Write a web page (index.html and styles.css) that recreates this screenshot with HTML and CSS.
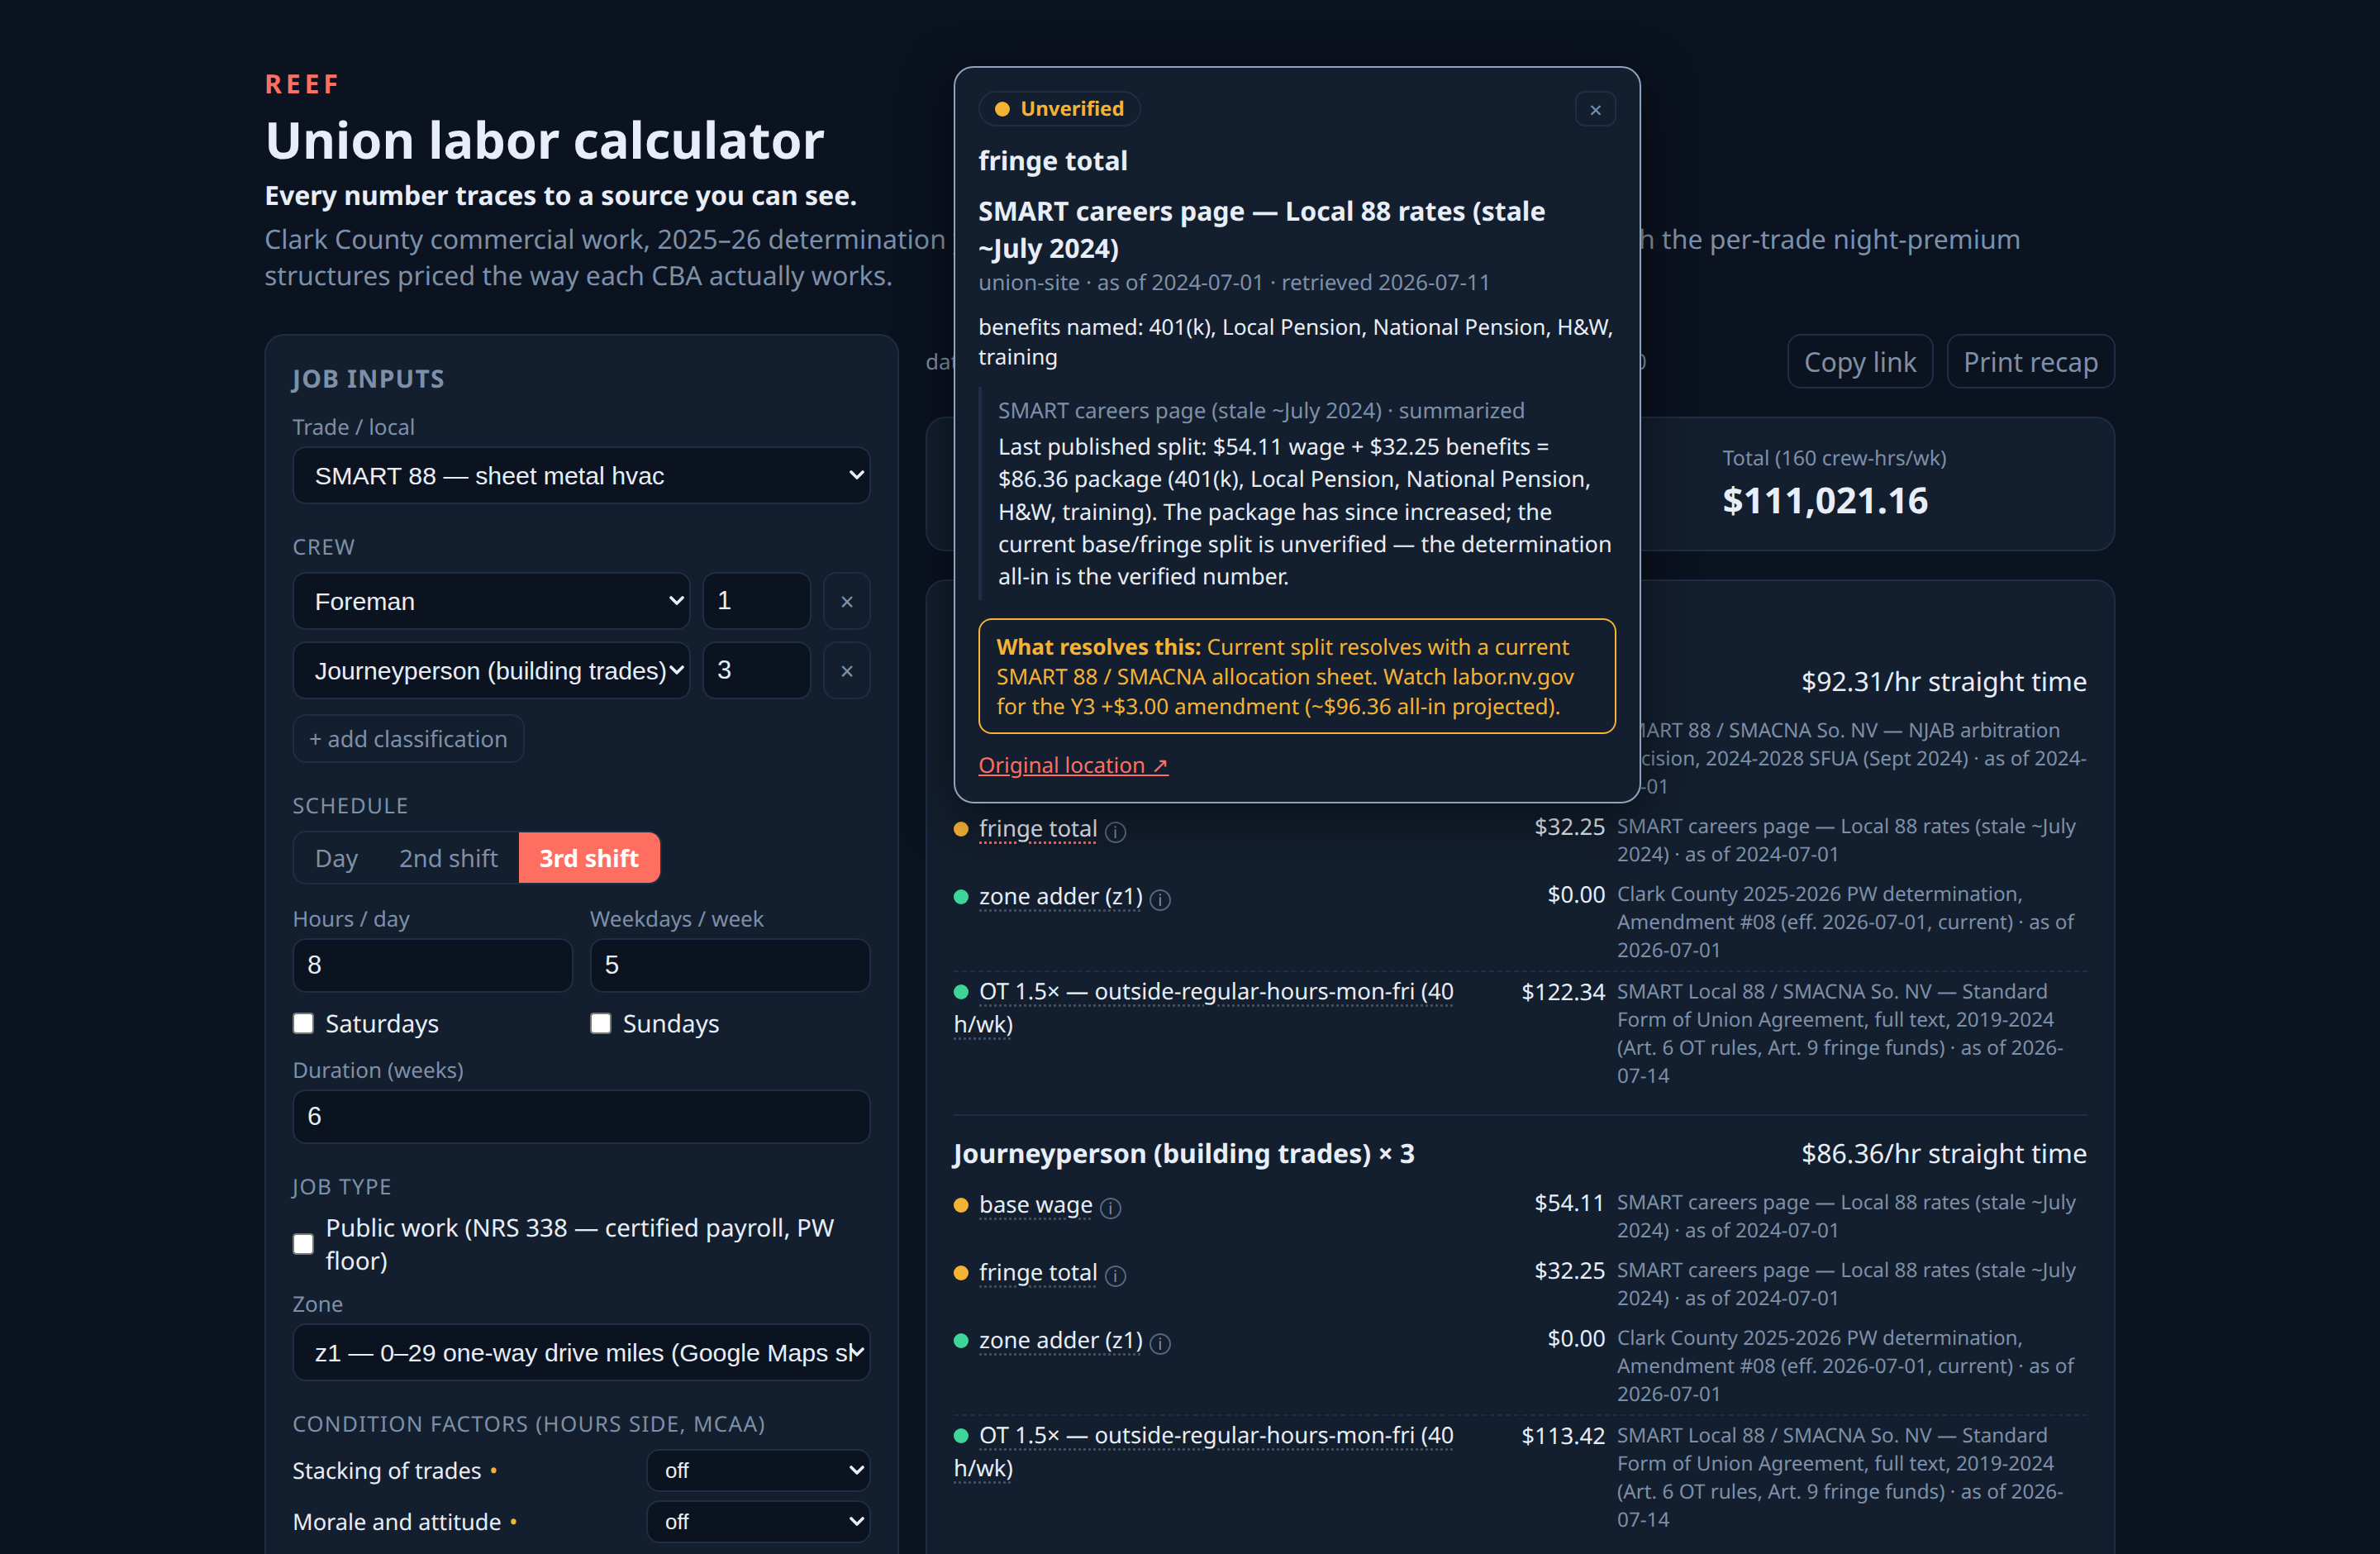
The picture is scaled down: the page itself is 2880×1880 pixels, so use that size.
FILE: index.html
```html
<!DOCTYPE html>
<html lang="en">
<head>
<meta charset="utf-8">
<title>Union labor calculator</title>
<link rel="stylesheet" href="styles.css">
</head>
<body>
<main class="page">
  <header class="hero">
    <div class="brand">REEF</div>
    <h1>Union labor calculator</h1>
    <p class="tagline">Every number traces to a source you can see.</p>
    <p class="desc">Clark County commercial work, 2025–26 determination year, with basic and fringe rates by crews and shifts, with the per-trade night-premium structures priced the way each CBA actually works.</p>
  </header>
  <div class="layout">
    <aside class="panel inputs">
      <h2 class="panel-title">JOB INPUTS</h2>
      <label class="field-label first">Trade / local</label>
      <select class="control tall"><option>SMART 88 — sheet metal hvac</option></select>

      <h3 class="section">CREW</h3>
      <div class="crew-row">
        <select class="control tall"><option>Foreman</option></select>
        <input class="control num" type="number" value="1">
        <button class="icon-btn">×</button>
      </div>
      <div class="crew-row">
        <select class="control tall"><option>Journeyperson (building trades)</option></select>
        <input class="control num" type="number" value="3">
        <button class="icon-btn">×</button>
      </div>
      <button class="add-btn">+ add classification</button>

      <h3 class="section">SCHEDULE</h3>
      <div class="seg">
        <button class="seg-btn">Day</button>
        <button class="seg-btn">2nd shift</button>
        <button class="seg-btn active">3rd shift</button>
      </div>
      <div class="two-col hours">
        <div>
          <label class="field-label">Hours / day</label>
          <input class="control num" type="number" value="8">
        </div>
        <div>
          <label class="field-label">Weekdays / week</label>
          <input class="control num" type="number" value="5">
        </div>
      </div>
      <div class="two-col checks">
        <label class="check"><input type="checkbox"><span>Saturdays</span></label>
        <label class="check"><input type="checkbox"><span>Sundays</span></label>
      </div>
      <label class="field-label duration">Duration (weeks)</label>
      <input class="control num" type="number" value="6">

      <h3 class="section">JOB TYPE</h3>
      <label class="check public"><input type="checkbox"><span>Public work (NRS 338 — certified payroll, PW floor)</span></label>
      <label class="field-label zone">Zone</label>
      <select class="control tall"><option>z1 — 0–29 one-way drive miles (Google Maps shortest route)</option></select>

      <h3 class="section cond">CONDITION FACTORS (HOURS SIDE, MCAA)</h3>
      <div class="factor"><span>Stacking of trades <i class="mini">•</i></span><select class="control small"><option>off</option></select></div>
      <div class="factor"><span>Morale and attitude <i class="mini">•</i></span><select class="control small"><option>off</option></select></div>
    </aside>

    <section class="results">
      <div class="toolbar">
        <span class="meta">data as of 2026-07-11 · Clark County 2025-2026 PW, Amendment #08 · 0</span>
        <div class="actions">
          <button class="ghost">Copy link</button>
          <button class="ghost">Print recap</button>
        </div>
      </div>
      <div class="panel summary">
        <div><div class="sum-label">Blended rate</div><div class="sum-value">$87.85</div></div>
        <div><div class="sum-label">Weekly</div><div class="sum-value">$18,503.53</div></div>
        <div><div class="sum-label">Total (160 crew-hrs/wk)</div><div class="sum-value">$111,021.16</div></div>
      </div>
      <div class="panel details">
        <h2 class="details-title">Rate build-up</h2>

        <div class="group">
          <div class="group-head"><strong>Foreman × 1</strong><span>$92.31/hr straight time</span></div>
          <div class="line">
            <div class="line-name"><i class="dot green"></i><span class="term">base wage</span> <span class="info">i</span></div>
            <div class="amount">$60.06</div>
            <div class="source">SMART 88 / SMACNA So. NV — NJAB arbitration decision, 2024-2028 SFUA (Sept 2024) · as of 2024-09-01</div>
          </div>
          <div class="line">
            <div class="line-name"><i class="dot amber"></i><span class="term open">fringe total</span> <span class="info">i</span></div>
            <div class="amount">$32.25</div>
            <div class="source">SMART careers page — Local 88 rates (stale ~July 2024) · as of 2024-07-01</div>
          </div>
          <div class="line">
            <div class="line-name"><i class="dot green"></i><span class="term">zone adder (z1)</span> <span class="info">i</span></div>
            <div class="amount">$0.00</div>
            <div class="source">Clark County 2025-2026 PW determination, Amendment #08 (eff. 2026-07-01, current) · as of 2026-07-01</div>
          </div>
          <div class="line ot">
            <div class="line-name"><i class="dot green"></i><span class="term">OT 1.5× — outside-regular-hours-mon-fri (40 h/wk)</span></div>
            <div class="amount">$122.34</div>
            <div class="source">SMART Local 88 / SMACNA So. NV — Standard Form of Union Agreement, full text, 2019-2024 (Art. 6 OT rules, Art. 9 fringe funds) · as of 2026-07-14</div>
          </div>
        </div>

        <div class="group">
          <div class="group-head"><strong>Journeyperson (building trades) × 3</strong><span>$86.36/hr straight time</span></div>
          <div class="line">
            <div class="line-name"><i class="dot amber"></i><span class="term">base wage</span> <span class="info">i</span></div>
            <div class="amount">$54.11</div>
            <div class="source">SMART careers page — Local 88 rates (stale ~July 2024) · as of 2024-07-01</div>
          </div>
          <div class="line">
            <div class="line-name"><i class="dot amber"></i><span class="term">fringe total</span> <span class="info">i</span></div>
            <div class="amount">$32.25</div>
            <div class="source">SMART careers page — Local 88 rates (stale ~July 2024) · as of 2024-07-01</div>
          </div>
          <div class="line">
            <div class="line-name"><i class="dot green"></i><span class="term">zone adder (z1)</span> <span class="info">i</span></div>
            <div class="amount">$0.00</div>
            <div class="source">Clark County 2025-2026 PW determination, Amendment #08 (eff. 2026-07-01, current) · as of 2026-07-01</div>
          </div>
          <div class="line ot">
            <div class="line-name"><i class="dot green"></i><span class="term">OT 1.5× — outside-regular-hours-mon-fri (40 h/wk)</span></div>
            <div class="amount">$113.42</div>
            <div class="source">SMART Local 88 / SMACNA So. NV — Standard Form of Union Agreement, full text, 2019-2024 (Art. 6 OT rules, Art. 9 fringe funds) · as of 2026-07-14</div>
          </div>
        </div>
      </div>
    </section>
  </div>
</main>

<div class="popover">
  <div class="pop-top">
    <span class="badge"><i class="dot amber"></i>Unverified</span>
    <button class="pop-close">×</button>
  </div>
  <div class="pop-term">fringe total</div>
  <div class="pop-title">SMART careers page — Local 88 rates (stale ~July 2024)</div>
  <div class="pop-meta">union-site · as of 2024-07-01 · retrieved 2026-07-11</div>
  <p class="pop-body">benefits named: 401(k), Local Pension, National Pension, H&amp;W, training</p>
  <blockquote class="pop-quote">
    <div class="quote-src">SMART careers page (stale ~July 2024) · summarized</div>
    <div class="quote-text">Last published split: $54.11 wage + $32.25 benefits = $86.36 package (401(k), Local Pension, National Pension, H&amp;W, training). The package has since increased; the current base/fringe split is unverified — the determination all-in is the verified number.</div>
  </blockquote>
  <div class="resolve"><strong>What resolves this:</strong> Current split resolves with a current SMART 88 / SMACNA allocation sheet. Watch labor.nv.gov for the Y3 +$3.00 amendment (~$96.36 all-in projected).</div>
  <a class="pop-link" href="#">Original location ↗</a>
</div>
</body>
</html>
```

FILE: styles.css
```css
* { box-sizing: border-box; }
html { zoom: 2; height: 100%; overflow: hidden; background: #0b1220; }
body {
  margin: 0;
  height: 100%;
  overflow: hidden;
  background: #0b1220;
  color: #e8eef7;
  font-family: "Noto Sans", sans-serif;
  font-size: 15px;
  text-rendering: geometricPrecision;
  position: relative;
}
.page { width: 1120px; margin: 0 auto; padding-top: 40px; }

.brand { color: #ff6f61; font-size: 16px; font-weight: 700; letter-spacing: 0.15em; line-height: 22px; }
h1 { margin: 3.5px 0 0; font-size: 30.6px; font-weight: 700; line-height: 38px; color: #e8eef7; }
.tagline { margin: 4px 0 0; font-size: 16px; font-weight: 700; line-height: 22px; color: #e8eef7; }
.desc { margin: 4.5px 0 0; font-size: 16px; line-height: 22px; color: #7d90a8; }

.layout { display: grid; grid-template-columns: 384px 1fr; gap: 16px; margin-top: 24px; align-items: start; }
.panel { background: #131e2e; border: 1px solid #1f2e46; border-radius: 12px; }
.inputs { padding: 16px; }
.panel-title { margin: 0; font-size: 15px; font-weight: 700; line-height: 20px; letter-spacing: 0.04em; color: #7d90a8; }
.field-label { display: block; font-size: 13.05px; line-height: 19px; color: #7d90a8; margin-bottom: 2.5px; }
.field-label.first { margin-top: 9.5px; }
.section { margin: 16.5px 0 6.5px; font-size: 13px; font-weight: 400; line-height: 18px; letter-spacing: 0.05em; color: #7d90a8; }

.control {
  display: block;
  width: 100%;
  background-color: #0c1320;
  color: #e8eef7;
  border: 1px solid #1f2e46;
  border-radius: 8px;
  font-family: "Liberation Sans", Arial, sans-serif;
  font-size: 15.15px;
}
select.control {
  appearance: none;
  background-image: url("data:image/svg+xml,%3Csvg xmlns='http://www.w3.org/2000/svg' viewBox='0 0 18 12'%3E%3Cpath d='M2 2l7 7 7-7' fill='none' stroke='%23e8eef7' stroke-width='3.6' stroke-linecap='round' stroke-linejoin='round'/%3E%3C/svg%3E");
  background-repeat: no-repeat;
  background-position: right 3px center;
  background-size: 9px 6px;
}
select.tall { height: 35px; padding: 0 10px 0 12.5px; }
.num { height: 33px; padding: 0 8px; font-size: 15.5px; }
.crew-row { display: grid; grid-template-columns: 1fr 66px 29px; gap: 7px; margin-bottom: 7px; }
.crew-row .num { height: 35px; }
.icon-btn {
  background: transparent;
  color: #7d90a8;
  border: 1px solid #1f2e46;
  border-radius: 8px;
  font-family: "Noto Sans", sans-serif;
  font-size: 15px;
  padding: 0;
}
.add-btn {
  display: block;
  height: 29.5px;
  margin-top: 9px;
  padding: 0 9px;
  background: transparent;
  color: #7d90a8;
  border: 1px solid #1f2e46;
  border-radius: 8px;
  font-family: "Noto Sans", sans-serif;
  font-size: 13.55px;
}
.seg { display: inline-flex; height: 32.5px; border: 1px solid #1f2e46; border-radius: 8px; overflow: hidden; }
.seg-btn {
  padding: 0 12.5px;
  background: transparent;
  border: 0;
  color: #7d90a8;
  font-family: "Noto Sans", sans-serif;
  font-size: 14.5px;
}
.seg-btn.active { background: #ff6f61; color: #fff; font-weight: 700; }
.two-col { display: grid; grid-template-columns: 1fr 1fr; gap: 10px; }
.hours { margin-top: 11px; }
.checks { margin-top: 8.5px; }
.check { display: flex; align-items: center; gap: 7px; font-size: 14.8px; line-height: 20px; color: #e8eef7; }
.check input { width: 13px; height: 13px; margin: 0; flex: none; }
.duration { margin-top: 8.5px; }
.public { margin-top: -0.5px; }
.zone { margin-top: 6.5px; }
.cond { margin-top: 16.5px; }
.factor { display: flex; justify-content: space-between; align-items: center; font-size: 13.6px; margin-bottom: 5px; }
.factor:first-of-type { margin-top: 7px; }
.mini { margin-left: 1px; color: #f5b335; font-style: normal; font-size: 14px; }
select.small { width: 136px; height: 26px; padding: 0 10px 0 10.5px; font-size: 13px; }

.toolbar { display: flex; align-items: center; justify-content: space-between; height: 33px; }
.meta { font-size: 13px; color: #7d90a8; }
.actions { display: flex; gap: 8px; }
.ghost {
  height: 33px;
  padding: 0 9px;
  background: transparent;
  color: #7d90a8;
  border: 1px solid #1f2e46;
  border-radius: 8px;
  font-family: "Noto Sans", sans-serif;
  font-size: 16px;
}
.summary { display: grid; grid-template-columns: repeat(3, 1fr); gap: 12px; height: 81.5px; margin-top: 17px; padding: 15px 16px; }
.sum-label { font-size: 12.5px; line-height: 18px; color: #7d90a8; }
.sum-value { font-size: 21.8px; font-weight: 700; line-height: 30px; margin-top: 1px; color: #e8eef7; }

.details { margin-top: 17px; padding: 16px 16px 40px; }
.details-title { margin: 0; font-size: 15px; line-height: 22px; color: #7d90a8; }
.group { padding: 11px 0; border-bottom: 1px solid #1f2e46; }
.group-head { display: flex; justify-content: space-between; align-items: center; height: 23px; margin-bottom: 6.5px; font-size: 16px; }
.group-head strong { font-weight: 700; }
.line { display: grid; grid-template-columns: 1fr 70px 285px; gap: 6.5px; padding: 3.5px 0; }
.line > .source { margin-left: 0.5px; }
.line.ot { border-top: 1px dashed #1f2e46; }
.line-name { font-size: 13.75px; line-height: 20px; }
.line.ot .line-name { margin-top: -1.5px; }
.term { text-decoration: underline dotted #3f5068; text-underline-offset: 3px; }
.term.open { text-decoration-color: #ff6f61; }
.info {
  display: inline-flex;
  align-items: center;
  justify-content: center;
  width: 13px;
  height: 13px;
  margin-left: 0.5px;
  border: 1px solid #55677f;
  border-radius: 50%;
  color: #7d90a8;
  font-size: 10px;
  line-height: 1;
  vertical-align: -1px;
}
.dot { display: inline-block; width: 9px; height: 9px; border-radius: 50%; margin-right: 6.5px; }
.dot.amber { background: #f5b335; }
.dot.green { background: #3dd598; }
.amount { font-size: 13.75px; line-height: 18px; text-align: right; }
.source { font-size: 12.15px; line-height: 17px; color: #7d90a8; }

.popover {
  position: absolute;
  left: 577px;
  top: 40px;
  width: 416px;
  height: 446px;
  padding: 14px 14px;
  background: #131e2e;
  border: 1px solid #8fa3bd;
  border-radius: 12px;
  box-shadow: 0 8px 32px rgba(0, 0, 0, 0.5);
}
.pop-top { display: flex; justify-content: space-between; height: 21.5px; }
.badge {
  display: inline-flex;
  align-items: center;
  padding: 0 9px;
  border: 1px solid #1f2e46;
  border-radius: 11px;
  color: #f5b335;
  font-size: 12px;
  font-weight: 700;
}
.pop-close {
  width: 25px;
  padding: 0;
  background: transparent;
  border: 1px solid #1f2e46;
  border-radius: 6px;
  color: #7d90a8;
  font-family: "Noto Sans", sans-serif;
  font-size: 14px;
}
.pop-term { margin-top: 10px; font-size: 16px; font-weight: 700; line-height: 22px; }
.pop-title { margin-top: 8px; font-size: 16px; font-weight: 700; line-height: 22.5px; }
.pop-meta { font-size: 13.1px; line-height: 18px; margin-top: 0; color: #7d90a8; }
.pop-body { margin: 9px 0 0; font-size: 13.1px; line-height: 18px; }
.pop-quote { margin: 9.6px 0 0; padding: 0 0 0 10px; border-left: 2px solid #1f2e46; }
.quote-src { font-size: 13.1px; line-height: 20px; color: #7d90a8; padding-top: 4px; }
.quote-text { font-size: 13.55px; line-height: 19.6px; margin-top: 2px; padding-bottom: 5px; }
.resolve {
  margin-top: 11px;
  padding: 7px 10px;
  border: 1px solid #f5b335;
  border-radius: 8px;
  color: #f5b335;
  font-size: 13.1px;
  line-height: 18px;
}
.resolve strong { font-weight: 700; }
.pop-link { display: inline-block; margin-top: 9px; font-size: 13px; line-height: 19px; color: #ff6f61; }
```
